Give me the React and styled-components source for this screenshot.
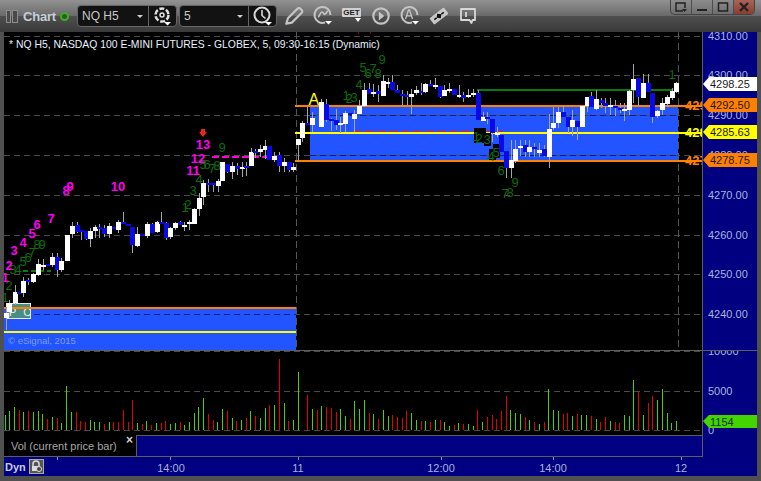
import React from "react";
import styled, { createGlobalStyle } from "styled-components";

const Global = createGlobalStyle`
  html, body { margin: 0; padding: 0; background: #505050; }
  body { font-family: "Liberation Sans", Arial, sans-serif; }
`;

const Frame = styled.div`
  width: 761px; height: 481px; box-sizing: border-box;
  display: flex; flex-direction: column; overflow: hidden;
  background: #505050;
  font-family: "Liberation Sans", Arial, sans-serif;
`;
const TitleBar = styled.header`
  height: 32px; flex: none; display: flex; align-items: center;
  padding: 0 6px 0 6px; box-sizing: border-box;
  background: linear-gradient(#929292 0, #6a6a6a 49%, #4f4f4f 50%, #3a3a3a 100%);
`;
const Handle = styled.span`
  width: ${p => p.$w}px; height: 13px; margin-right: 1px; flex: none;
  border: 1px solid #8d8d8d; background: #4a4a4a; box-sizing: border-box; margin-top: 1px;
`;
const TitleText = styled.span`
  color: #c6ced8; font-size: 13px; font-weight: 700; margin-left: 4px; width: 34px; flex: none; letter-spacing: -.2px;
`;
const Led = styled.span`
  width: 9px; height: 9px; flex: none; box-sizing: border-box; border: 2px solid #3fae2a; border-radius: 50%; background: #2c5c24;
  margin: 0 8px 0 3px;
`;
const Combo = styled.div`
  width: ${p => p.$w}px; height: 22px; flex: none; margin-right: 2px; box-sizing: border-box;
  display: flex; align-items: stretch; background: #121212;
  border: 1px solid #666; border-radius: 4px; color: #c8c8c8; font-size: 12px;
`;
const ComboField = styled.div`
  flex: 1; display: flex; align-items: center; justify-content: space-between; padding: 0 5px 0 4px;
`;
const Caret = styled.span`
  width: 0; height: 0; border: 3px solid transparent; border-top: 3px solid #d0d0d0; margin-top: 3px;
`;
const ComboIcon = styled.div`
  width: 27px; flex: none; border-left: 1px solid #666; display: flex; align-items: center; justify-content: center;
`;
const ToolIcon = styled.div`
  width: 29px; height: 32px; flex: none; display: flex; align-items: center; justify-content: center;
`;
const ToolGroup = styled.div`
  display: flex; margin-left: 0;
`;
const WinButtons = styled.div`
  margin-left: auto; align-self: flex-start; display: flex; height: 15px; box-sizing: border-box;
  border: 1px solid #444; border-top: none; border-radius: 0 0 5px 5px; overflow: hidden;
  background: linear-gradient(#8c8c8c, #6f6f6f);
`;
const WinBtn = styled.div`
  width: ${p => p.$w || 20}px; display: flex; align-items: center; justify-content: center;
  border-left: ${p => p.$first ? "none" : "1px solid #4c4c4c"};
  background: ${p => p.$close ? "linear-gradient(#a8645a,#8c3c30)" : "none"};
`;
const PriceRow = styled.section`
  height: 318px; flex: none; display: flex; padding-left: 4px; padding-right: 4px;
`;
const ChartSvg = styled.svg`
  display: block; width: 698px; height: 318px; flex: none; background: #000;
  font-family: "Liberation Sans", Arial, sans-serif;
`;
const AxisSvg = styled.svg`
  display: block; width: 54px; height: ${p => p.$h}px; flex: none; background: #000080;
  border-left: 1px solid #5e5e5e; font-family: "Liberation Sans", Arial, sans-serif;
  box-sizing: content-box;
`;
const Separator = styled.div`
  height: 1px; margin: 0 4px; flex: none; background: #5e5e5e;
`;
const LowerRow = styled.section`
  height: 106px; flex: none; display: flex; padding: 0 4px;
`;
const LowerLeft = styled.div`
  width: 698px; flex: none; display: flex; flex-direction: column;
  border-bottom: 1px solid #5e5e5e; box-sizing: border-box;
`;
const VolumeSvg = styled.svg`
  display: block; width: 698px; height: 84px; flex: none; background: #000;
`;
const TabRow = styled.div`
  flex: 1; display: flex;
`;
const VolTab = styled.div`
  width: 132px; flex: none; box-sizing: border-box; background: #000; color: #a8a8a8;
  font-size: 11px; display: flex; align-items: center; padding-left: 7px; justify-content: space-between;
  white-space: nowrap;
`;
const TabClose = styled.span`
  align-self: flex-start; color: #d0d0d0; font-size: 12px; font-weight: 700; line-height: 11px; margin: 0 3px 0 0;
`;
const TabFill = styled.div`
  flex: 1; background: #000080; border-left: 1px solid #5e5e5e; border-top: 1px solid #5e5e5e;
`;
const TimeBar = styled.footer`
  height: 19px; flex: none; margin: 0 4px; display: flex; background: #000080;
`;
const DynCell = styled.div`
  width: 43px; flex: none; display: flex; align-items: center; box-sizing: border-box; padding-left: 1px; gap: 3px;
`;
const DynText = styled.span`
  color: #c4cce8; font-size: 11px; font-weight: 700;
`;
const LockBtn = styled.div`
  width: 15px; height: 15px; box-sizing: border-box; border: 1px solid #aaa; background: #555;
  display: flex; align-items: center; justify-content: center;
`;
const TimeSvg = styled.svg`
  display: block; width: 710px; height: 19px; flex: none;
  font-family: "Liberation Sans", Arial, sans-serif;
`;

const W = "w", B = "b";
const seg = (ox, oy, rows) => rows.map(r => ({
  x: Math.round(ox + r[0] / 3), top: Math.round(oy + r[1] / 3), bot: Math.round(oy + r[2] / 3),
  wt: Math.round(oy + r[3] / 3), wb: Math.round(oy + r[4] / 3), c: r[5],
}));

const candles = [
  ...seg(0, 170, [
    [17,428,443,415,480,W],[28,400,425,390,440,W],[44,365,400,345,405,W],[57,367,372,367,372,B],[70,333,370,320,380,W],
    [85,330,337,325,345,B],[100,313,335,310,340,W],[115,282,315,268,318,W],[128,284,288,268,300,W],[143,282,287,282,287,B],
    [157,260,285,250,290,W],[172,262,300,250,320,B],[184,272,300,265,305,W],[200,195,273,195,273,W],[215,168,192,155,205,W],
    [230,165,185,155,190,B],[243,180,186,180,210,B],[257,183,207,183,210,B],[271,183,207,175,230,W],[284,170,183,165,205,W],
    [298,172,176,162,205,B],[313,173,191,165,200,B],[328,168,191,160,205,W],[341,172,177,172,177,B],[355,156,180,150,190,W],
    [370,156,160,125,160,B],[385,162,168,162,168,B],[397,172,225,172,248,B],[412,193,228,170,232,W],[426,192,197,192,197,B],
    [440,162,197,155,205,W],[455,162,190,158,190,B],[470,156,185,152,190,W],[484,155,161,125,161,B],[497,160,203,155,210,B],
    [511,175,202,172,208,W],[526,158,175,155,180,W],[541,156,165,152,165,B],[553,165,170,155,182,W],[568,155,161,150,180,W],
    [583,118,162,115,162,W],[596,85,118,70,138,W],[610,40,80,30,105,W],
  ]),
  ...seg(150, 120, [
    [175,190,194,178,215,B],[189,190,194,190,215,B],[203,183,198,178,215,W],[217,125,183,125,183,W],[232,132,155,132,160,B],
    [246,138,155,125,178,W],[260,138,148,128,165,B],[275,140,147,125,170,W],[289,138,143,125,168,B],[302,96,138,84,138,W],
    [316,94,99,88,115,B],[331,88,96,75,110,W],[345,78,90,60,118,W],[358,78,120,78,120,B],[373,108,120,95,125,W],
    [388,105,138,97,155,B],[402,125,138,115,155,W],[416,125,150,125,155,B],[430,141,150,130,155,W],
  ]),
  ...seg(290, 50, [
    [25,267,285,267,335,W],[37,220,264,212,275,W],[52,220,225,170,225,B],[67,204,226,185,245,W],[94,155,232,148,232,W],
    [109,162,210,148,215,B],[124,207,212,205,243,B],[138,210,225,178,240,B],[151,219,224,200,250,W],[166,189,222,182,245,W],
    [180,189,193,189,193,B],[193,192,207,180,245,W],[208,168,192,150,192,W],[223,120,168,100,168,W],[237,118,132,100,132,B],
    [250,125,132,102,140,W],[265,124,132,105,155,B],[280,93,138,75,138,W],[294,97,102,85,115,W],[307,96,120,75,120,B],
    [322,120,130,105,130,B],[336,131,137,120,165,B],[350,136,141,122,165,B],[364,132,141,118,192,W],[379,121,129,108,135,W],
    [393,124,129,100,135,B],[406,102,126,100,130,W],[421,102,107,90,107,B],[436,105,111,85,118,W],[451,108,140,108,145,B],
    [463,120,138,105,138,W],[478,117,123,100,130,W],[493,117,135,117,135,B],[506,135,141,105,145,W],[520,135,143,125,155,B],
    [535,135,140,118,145,W],[549,128,135,118,140,W],[563,130,210,120,210,B],[578,201,213,186,213,W],[592,200,205,186,222,B],
    [607,207,250,207,275,B],[620,250,256,232,260,W],[634,254,306,254,306,B],
  ]),
  ...seg(500, 0, [
    [18,453,505,453,535,B],[32,480,505,420,535,W],[46,447,482,420,490,W],[61,437,443,420,468,W],[75,435,455,420,470,B],
    [88,440,455,420,472,W],[103,440,447,430,470,B],[118,450,458,430,470,W],[132,447,468,435,470,B],[146,387,470,342,505,W],
    [160,370,385,320,390,W],[175,336,370,320,385,W],[190,336,352,318,352,B],[203,352,380,352,400,B],[217,360,380,330,408,W],
    [232,362,380,362,420,B],[245,318,380,318,380,W],[260,292,318,292,335,W],[274,288,322,275,322,B],[288,297,327,270,330,W],
    [302,300,310,295,325,B],[316,310,317,295,340,B],[331,315,320,295,345,W],[346,319,324,300,348,B],[359,323,328,310,340,B],
    [373,327,332,310,362,W],[388,273,330,270,345,W],[400,237,270,192,310,W],[415,234,291,234,318,B],[430,250,293,222,295,W],
    [445,250,275,222,275,B],[457,280,350,280,368,B],[472,333,347,330,355,W],[487,310,330,295,345,W],[502,292,312,285,322,W],
    [515,272,294,265,300,W],[529,250,276,245,278,W],
  ]),
];

const mag = [
  ["1",5,282],["2",9,270],["3",14,255],["4",23,247],["5",32,238],["6",37,229],["7",51,223],["8",66,195],["9",70,191],
  ["10",118,191],["11",193,175],["12",198,163],["13",203,149],
];
const grn = [
  ["1",5,302],["2",9,290],["3",13,274],["4",18,274],["5",23,266],["6",28,262],["7",32,257],["8",37,249],["9",42,249],
  ["1",185,212],["2",188,209],["3",193,195],["4",199,184],["5",203,169],["6",207,169],["7",212,173],["8",217,170],["9",222,152],
  ["9",382,64],["5",363,72],["6",368,78],["7",373,73],["8",378,78],["4",359,89],["1",346,100],["2",349,103],["3",354,102],
  ["1",476,141],["2",479,143],["3",487,144],["5",496,157],["4",491,161],["6",501,175],["9",515,187],["7",505,198],["8",510,197],["1",672,79],
];
const grid = [36, 75, 115, 155, 195, 235, 274, 314];

const Candle = ({ d }) => (
  <g>
    {d.wt < d.wb && <line x1={d.x + .5} x2={d.x + .5} y1={d.wt} y2={d.wb} stroke="#a4a4a4" />}
    <rect x={d.x - 2} y={d.top} width="5" height={Math.max(2, d.bot - d.top)} fill={d.c === W ? "#fff" : "#0a0ae6"} />
  </g>
);

const PriceChart = () => (
  <ChartSvg viewBox="4 32 698 318">
    {/* zones */}
    <rect x="4" y="309" width="292" height="41" fill="#2255ff" />
    <rect x="310" y="107" width="368" height="53" fill="#2255ff" />
    {/* grid */}
    {grid.map(y => <line key={y} x1="4" x2="702" y1={y + .5} y2={y + .5} stroke="#4a4a4a" strokeDasharray="6 4" />)}
    <line x1="296.5" x2="296.5" y1="32" y2="350" stroke="#555" strokeDasharray="7 4" />
    <line x1="678.5" x2="678.5" y1="32" y2="350" stroke="#555" strokeDasharray="7 4" />
    <line x1="310" x2="678" y1="115.5" y2="115.5" stroke="#0b1f70" strokeDasharray="6 4" />
    <line x1="310" x2="678" y1="155.5" y2="155.5" stroke="#0b1f70" strokeDasharray="6 4" />
    <line x1="4" x2="296" y1="314.5" y2="314.5" stroke="#0b1f70" strokeDasharray="6 4" />
    {/* PC box */}
    <rect x="6.5" y="303.5" width="24" height="15" fill="#4b8c84" stroke="#e8e8e8" />
    <text x="9" y="316" fontSize="11" letterSpacing="2" fill="#e8f0f0">P C</text>
    {/* levels */}
    <rect x="4" y="307" width="292" height="2" fill="#ff7f00" />
    <rect x="4" y="331" width="292" height="2" fill="#ffff00" />
    <rect x="295" y="105" width="407" height="2" fill="#ff7f00" />
    <rect x="295" y="132" width="407" height="2" fill="#ffff00" />
    <rect x="295" y="160" width="407" height="2" fill="#ff7f00" />
    <line x1="353" x2="503" y1="131.5" y2="131.5" stroke="#e02020" strokeDasharray="9 3" />
    <rect x="477" y="89" width="195" height="2" fill="#0a7a0a" />
    <line x1="212" x2="270" y1="157" y2="157" stroke="#ff00dd" strokeWidth="2" strokeDasharray="7 3" />
    <line x1="23" x2="51" y1="271" y2="271" stroke="#0a7a0a" strokeWidth="2" strokeDasharray="5 3" />
    <rect x="358" y="32" width="1" height="2" fill="#a00000" />
    <rect x="370" y="32" width="1" height="2" fill="#a00000" />
    {/* highlighted count boxes */}
    <rect x="474" y="128" width="12" height="15" fill="#000" />
    <rect x="484" y="133" width="7" height="13" fill="#000" />
    <rect x="493" y="144" width="7" height="14" fill="#000" />
    <rect x="489" y="149" width="7" height="11" fill="#000" />
    {candles.map((d, i) => <Candle key={i} d={d} />)}
    {/* counts */}
    {grn.map(([t, x, y], i) => <text key={i} x={x} y={y} fontSize="13" textAnchor="middle" fill="#0a6e0a">{t}</text>)}
    {mag.map(([t, x, y], i) => <text key={i} x={x} y={y} fontSize="13" fontWeight="700" textAnchor="middle" fill="#ff00ee">{t}</text>)}
    <path d="M201 129h4v3h2l-4 5-4-5h2z" fill="#f02020" />
    <text x="308.500" y="105" fontSize="16" fill="#ffff00">A</text>
    {/* header */}
    <text x="9" y="48" fontSize="10.4" fill="#e8f2ff">* NQ H5, NASDAQ 100 E-MINI FUTURES - GLOBEX, 5, 09:30-16:15 (Dynamic)</text>
    <text x="8" y="344" fontSize="9.5" fill="#7d9cf0">© eSignal, 2015</text>
    {/* clipped level labels */}
    <text x="685" y="110" fontSize="13" fontWeight="700" fill="#ff8000">4292.50</text>
    <text x="685" y="137" fontSize="13" fontWeight="700" fill="#ffff00">4285.63</text>
    <text x="685" y="165" fontSize="13" fontWeight="700" fill="#ff8000">4278.75</text>
  </ChartSvg>
);

const tagPts = (y1, y2) => `0,${(y1 + y2) / 2} 6,${y1} 54,${y1} 54,${y2} 6,${y2}`;
const Tag = ({ y1, y2, fill, text }) => (
  <g>
    <polygon points={tagPts(y1, y2)} fill={fill} />
    <text x="7" y={y2 - 3} fontSize="11" fill="#1a1a1a">{text}</text>
  </g>
);
const priceLabels = [["4310.00", 40], ["4300.00", 79], ["4290.00", 119], ["4280.00", 159], ["4270.00", 199], ["4260.00", 239], ["4250.00", 278], ["4240.00", 318]];

const PriceAxis = () => (
  <AxisSvg $h={318} viewBox="0 32 54 318">
    {priceLabels.map(([t, y]) => <text key={t} x="5" y={y} fontSize="11" fill="#a9b5de">{t}</text>)}
    <Tag y1={77} y2={91} fill="#fff" text="4298.25" />
    <Tag y1={98} y2={112} fill="#ff7f00" text="4292.50" />
    <Tag y1={125} y2={139} fill="#ffff00" text="4285.63" />
    <Tag y1={153} y2={167} fill="#ff7f00" text="4278.75" />
  </AxisSvg>
);

const G = 1, R = 0;
const volL = [[16,210,G],[28,198,G],[43,186,G],[58,195,R],[70,201,G],[85,198,R],[100,201,G],[115,198,G],[127,207,G],[142,222,R],[157,216,G],[172,219,R],[184,234,G],[199,123,G],[214,201,G],[229,201,R],[241,228,R],[256,231,R],[271,225,G],[283,231,G],[298,231,G],[313,237,R],[328,231,G],[340,231,R],[355,231,R],[370,195,R],[385,231,R],[397,165,R],[412,234,G],[427,237,R],[439,228,G],[454,240,R],[469,234,G],[484,234,R],[496,228,R],[511,237,G],[526,234,G],[541,231,R],[553,240,G],[568,231,G],[583,204,G],[595,186,G],[610,159,G],[625,207,R],[640,225,R],[652,231,G],[667,192,G],[682,198,R],[697,219,G],[709,228,R],[724,225,G],[739,219,R],[751,198,G],[766,213,R],[781,219,G],[796,189,G],[808,180,R],[823,180,G],[838,42,R],[853,174,G],[865,228,R],[880,225,G],[895,81,G]];
const volR = [[22,150,R],[37,192,G],[52,195,R],[64,183,G],[79,186,R],[94,189,R],[109,201,R],[121,192,G],[136,213,G],[151,222,R],[163,168,G],[178,192,G],[193,165,G],[208,204,R],[220,207,G],[235,222,R],[250,195,G],[265,213,G],[277,210,R],[292,216,R],[307,219,R],[319,198,R],[334,204,G],[349,225,G],[364,228,R],[376,228,G],[391,231,R],[406,225,G],[421,225,R],[433,231,G],[448,243,G],[463,240,R],[475,234,G],[490,237,R],[505,237,G],[520,243,G],[532,195,R],[547,231,G],[562,216,R],[577,210,R],[589,222,R],[604,198,R],[619,153,R],[631,195,G],[646,204,G],[661,207,G],[676,216,R],[688,225,G],[703,231,R],[718,237,G],[733,231,R],[745,132,G],[760,195,G],[775,198,G],[790,207,R],[802,204,R],[817,213,G],[832,207,R],[844,210,G],[859,210,G],[874,213,R],[889,222,G],[901,231,R],[916,216,R],[931,228,G],[946,231,R],[958,234,R],[973,210,G],[988,213,G],[1000,105,G],[1015,141,R],[1030,210,G],[1045,174,R],[1057,153,R],[1072,165,G],[1087,132,G],[1102,204,G],[1114,234,G],[1129,228,G]];
const volBars = [
  ...volL.map(([x, t, c]) => ({ x: Math.floor(x / 3), t: 345 + t / 3, c })),
  ...volR.map(([x, t, c]) => ({ x: Math.floor(300 + x / 3), t: 345 + t / 3, c })),
];

const VolumeChart = () => (
  <VolumeSvg viewBox="4 351 698 84">
    {[351, 391, 430].map(y => <line key={y} x1="4" x2="702" y1={y + .5} y2={y + .5} stroke="#4a4a4a" strokeDasharray="6 4" />)}
    {volBars.map((b, i) => <rect key={i} x={b.x} y={b.t} width="1" height={430 - b.t} fill={b.c ? "#44d400" : "#e40000"} />)}
  </VolumeSvg>
);

const VolumeAxis = () => (
  <AxisSvg $h={106} viewBox="0 351 54 106">
    <text x="5" y="355" fontSize="11" fill="#a9b5de">10000</text>
    <text x="5" y="395" fontSize="11" fill="#a9b5de">5000</text>
    <text x="5" y="434" fontSize="11" fill="#a9b5de">0</text>
    <polygon points="0,421 6,415 54,415 54,428 6,428" fill="#44d400" />
    <text x="7" y="426" fontSize="11" fill="#10300a">1154</text>
  </AxisSvg>
);

const ticks = [57, 170, 298, 441, 553, 681];
const times = [["14:00", 171], ["11", 298], ["12:00", 441], ["14:00", 553], ["12", 681]];
const TimeAxis = () => (
  <TimeSvg viewBox="47 458 710 19">
    {ticks.map(x => <line key={x} x1={x + .5} x2={x + .5} y1="458" y2="461" stroke="#8a8a8a" />)}
    {times.map(([t, x], i) => <text key={i} x={x} y="473" fontSize="11" textAnchor="middle" fill="#a9b5de">{t}</text>)}
  </TimeSvg>
);

const ic = "#c4c4c4";
const DropTri = ({ x = 14, y = 17 }) => <path d={`M${x} ${y}h7l-3.500 3.500z`} fill="#fff" />;
const GearIcon = () => (
  <svg width="22" height="22" viewBox="0 0 22 22">
    <circle cx="10" cy="10" r="6.500" fill="none" stroke="#e0e0e0" strokeWidth="2.500" strokeDasharray="5 1.800" />
    <circle cx="10" cy="10" r="2" fill="none" stroke="#e0e0e0" strokeWidth="1.500" />
    <DropTri x={12} y={17} />
  </svg>
);
const ClockIcon = () => (
  <svg width="24" height="24" viewBox="0 0 24 24">
    <circle cx="11" cy="11" r="7.500" fill="none" stroke="#d8d8d8" strokeWidth="2" />
    <path d="M11 6v5.500l3.500 3" fill="none" stroke="#d8d8d8" strokeWidth="1.600" />
    <DropTri x={14} y={18} />
  </svg>
);
const PencilIcon = () => (
  <svg width="22" height="22" viewBox="0 0 20 20">
    <path d="M3 17l1.500-5L13 3.500a2 2 0 0 1 3 0l.8.8a2 2 0 0 1 0 3L8 16z" fill="none" stroke={ic} strokeWidth="2" strokeLinejoin="round" />
  </svg>
);
const CurveIcon = () => (
  <svg width="24" height="24" viewBox="0 0 24 24">
    <path d="M14 18.500A8 8 0 1 1 19.500 11" fill="none" stroke={ic} strokeWidth="2" />
    <path d="M7 13c2-1 2-5 4-5s1 3 3 2 2-3 3-3" fill="none" stroke={ic} strokeWidth="1.600" />
    <DropTri x={14} y={17} />
  </svg>
);
const GetLabel = styled.span`
  display: inline-block; background: #d0d0d0; color: #222; font-size: 8px; font-weight: 700; line-height: 9px;
  padding: 0 1px; border-radius: 1px;
`;
const GetWrap = styled.div`
  display: flex; flex-direction: column; align-items: flex-end;
`;
const GetCaret = styled.span`
  width: 0; height: 0; border: 3.500px solid transparent; border-top: 4px solid #fff; margin-right: 0; margin-top: 1px;
`;
const PlayIcon = () => (
  <svg width="22" height="22" viewBox="0 0 20 20">
    <circle cx="10" cy="10" r="7" fill="none" stroke={ic} strokeWidth="2" />
    <path d="M8 6l5 4-5 4z" fill={ic} />
  </svg>
);
const AIcon = () => (
  <svg width="24" height="24" viewBox="0 0 24 24">
    <path d="M14 18.500A8 8 0 1 1 19.500 11" fill="none" stroke={ic} strokeWidth="2" />
    <path d="M7.500 15l3-9h1l3 9M9 11.800h4" fill="none" stroke={ic} strokeWidth="1.300" />
    <DropTri x={14} y={17} />
  </svg>
);
const DiamondIcon = () => (
  <svg width="22" height="20" viewBox="0 0 22 20">
    <g transform="rotate(-38 11 10)">
      <rect x="2" y="6" width="18" height="8" rx="1" fill="#c8c8c8" />
      <path d="M11 7l3 3-3 3-3-3z" fill="#111" />
      <path d="M5 10h3M14 10h3" stroke="#111" strokeWidth="1.500" />
    </g>
  </svg>
);
const BubbleIcon = () => (
  <svg width="20" height="20" viewBox="0 0 20 20">
    <path d="M3 3h14v11h-2.500l-1 3-2-3H3z" fill="none" stroke="#d8d8d8" strokeWidth="1.800" strokeLinejoin="round" />
    <path d="M8 6v5" stroke="#d8d8d8" strokeWidth="1.800" />
  </svg>
);
const LockIcon = () => (
  <svg width="13" height="13" viewBox="0 0 13 13">
    <path d="M3 6V4a3 3 0 0 1 6 0v2" fill="none" stroke="#ddd" strokeWidth="1.500" />
    <rect x="2" y="6" width="8" height="5" fill="#ddd" />
    <circle cx="9" cy="9" r="2.500" fill="#444" stroke="#ddd" />
  </svg>
);

export default function App() {
  return (
    <>
      <Global />
      <Frame>
        <TitleBar>
          <Handle $w={5} />
          <Handle $w={6} />
          <TitleText>Chart</TitleText>
          <Led />
          <Combo $w={100}>
            <ComboField>NQ H5<Caret /></ComboField>
            <ComboIcon><GearIcon /></ComboIcon>
          </Combo>
          <Combo $w={98}>
            <ComboField>5<Caret /></ComboField>
            <ComboIcon><ClockIcon /></ComboIcon>
          </Combo>
          <ToolGroup>
            <ToolIcon><PencilIcon /></ToolIcon>
            <ToolIcon><CurveIcon /></ToolIcon>
            <ToolIcon><GetWrap><GetLabel>GET</GetLabel><GetCaret /></GetWrap></ToolIcon>
            <ToolIcon><PlayIcon /></ToolIcon>
            <ToolIcon><AIcon /></ToolIcon>
            <ToolIcon><DiamondIcon /></ToolIcon>
            <ToolIcon><BubbleIcon /></ToolIcon>
          </ToolGroup>
          <WinButtons>
            <WinBtn $first>
              <svg width="14" height="12" viewBox="0 0 14 12"><path d="M9 10H2V2h9v5" fill="none" stroke="#222" strokeWidth="1.500" /><path d="M8 8h5l-2.500 3z" fill="#222" /></svg>
            </WinBtn>
            <WinBtn>
              <svg width="12" height="12" viewBox="0 0 12 12"><rect x="1" y="8" width="10" height="2" fill="#222" /></svg>
            </WinBtn>
            <WinBtn>
              <svg width="12" height="12" viewBox="0 0 12 12"><rect x="1.500" y="2" width="9" height="8" fill="none" stroke="#222" strokeWidth="1.500" /></svg>
            </WinBtn>
            <WinBtn $close $w={20}>
              <svg width="12" height="12" viewBox="0 0 12 12"><path d="M2 2l8 8M10 2l-8 8" stroke="#222" strokeWidth="2.400" /></svg>
            </WinBtn>
          </WinButtons>
        </TitleBar>
        <PriceRow>
          <PriceChart />
          <PriceAxis />
        </PriceRow>
        <Separator />
        <LowerRow>
          <LowerLeft>
            <VolumeChart />
            <TabRow>
              <VolTab>Vol (current price bar)<TabClose>×</TabClose></VolTab>
              <TabFill />
            </TabRow>
          </LowerLeft>
          <VolumeAxis />
        </LowerRow>
        <TimeBar>
          <DynCell>
            <DynText>Dyn</DynText>
            <LockBtn><LockIcon /></LockBtn>
          </DynCell>
          <TimeAxis />
        </TimeBar>
      </Frame>
    </>
  );
}
